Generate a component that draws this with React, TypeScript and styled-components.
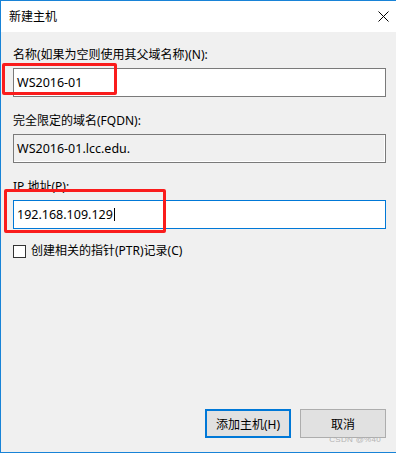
import React from "react";
import styled, { createGlobalStyle } from "styled-components";

const GlobalStyle = createGlobalStyle`
  html, body {
    margin: 0;
    padding: 0;
    background: #ffffff;
  }
  body {
    font-family: "Noto Sans", "Noto Sans CJK SC", sans-serif;
    font-size: 12px;
    color: #000000;
  }
`;

const App: React.FC = () => {
  return (
    <>
      <GlobalStyle />
      <Window>
        <TitleBar>
          <Title>新建主机</Title>
          <CloseButton aria-label="关闭">
            <svg width="11" height="11" viewBox="0 0 11 11">
              <path d="M0.5 0.5 L10.5 10.5 M10.5 0.5 L0.5 10.5" stroke="#000" strokeWidth="1" />
            </svg>
          </CloseButton>
        </TitleBar>

        <Body>
          <Field>
            <Label>名称(如果为空则使用其父域名称)(N):</Label>
            <InputWrap>
              <Input>WS2016-01</Input>
              <Highlight $left={-11} $top={-5} $width={115} $height={32} />
            </InputWrap>
          </Field>

          <Field>
            <Label>完全限定的域名(FQDN):</Label>
            <Input $readOnly>WS2016-01.lcc.edu.</Input>
          </Field>

          <Field>
            <Label>IP 地址(P):</Label>
            <InputWrap>
              <Input $focused>
                192.168.109.129
                <Caret />
              </Input>
              <Highlight $left={-9} $top={-11} $width={162} $height={44} />
            </InputWrap>
          </Field>

          <CheckRow>
            <Checkbox />
            <span>创建相关的指针(PTR)记录(C)</span>
          </CheckRow>

          <ButtonRow>
            <Button $primary>添加主机(H)</Button>
            <Button>取消</Button>
          </ButtonRow>
        </Body>

        <Watermark>CSDN @%40</Watermark>
      </Window>
    </>
  );
};

export default App;

const Window = styled.div`
  position: relative;
  width: 395px;
  height: 451px;
  border-top: 1px solid #1883d7;
  border-left: 1px solid #1883d7;
  border-bottom: 1px solid #1883d7;
  display: flex;
  flex-direction: column;
  background: #f0f0f0;
`;

const TitleBar = styled.div`
  height: 31px;
  background: #ffffff;
  display: flex;
  align-items: center;
  justify-content: space-between;
  padding: 0 7px 0 8px;
`;

const Title = styled.div`
  font-size: 12px;
  line-height: 16px;
`;

const CloseButton = styled.div`
  width: 11px;
  height: 11px;
  display: flex;
  margin-right: 0;
  svg {
    display: block;
  }
`;

const Body = styled.div`
  flex: 1;
  display: flex;
  flex-direction: column;
  padding: 15px 10px 14px 12px;
`;

const Field = styled.div`
  display: flex;
  flex-direction: column;
  margin-bottom: 16px;
  &:nth-of-type(3) {
    margin-bottom: 14px;
  }
`;

const Label = styled.div`
  line-height: 16px;
  margin-bottom: 5px;
  white-space: nowrap;
`;

const InputWrap = styled.div`
  position: relative;
`;

const Input = styled.div<{ $readOnly?: boolean; $focused?: boolean }>`
  height: 29px;
  box-sizing: border-box;
  border: 1px solid ${(p) => (p.$focused ? "#0078d7" : "#7a7a7a")};
  background: ${(p) => (p.$readOnly ? "#f0f0f0" : "#ffffff")};
  box-shadow: ${(p) => (p.$readOnly ? "inset -1px -1px 0 #ffffff" : "none")};
  padding: 0 4px 0 3px;
  display: flex;
  align-items: center;
  font-size: 12.5px;
  white-space: nowrap;
`;

const Caret = styled.span`
  display: inline-block;
  width: 1px;
  height: 13px;
  background: #000;
  margin-left: 1px;
`;

const Highlight = styled.div<{ $left: number; $top: number; $width: number; $height: number }>`
  position: absolute;
  left: ${(p) => p.$left}px;
  top: ${(p) => p.$top}px;
  width: ${(p) => p.$width}px;
  height: ${(p) => p.$height}px;
  box-sizing: border-box;
  border: 3px solid #fa1c1c;
  border-radius: 2px;
  pointer-events: none;
`;

const CheckRow = styled.label`
  display: flex;
  align-items: center;
  gap: 5px;
  line-height: 16px;
`;

const Checkbox = styled.span`
  width: 13px;
  height: 13px;
  box-sizing: border-box;
  border: 1px solid #333333;
  background: #ffffff;
  flex-shrink: 0;
`;

const ButtonRow = styled.div`
  margin-top: auto;
  display: flex;
  justify-content: flex-end;
  gap: 9px;
`;

const Button = styled.div<{ $primary?: boolean }>`
  width: 86px;
  height: 29px;
  box-sizing: border-box;
  border: ${(p) => (p.$primary ? "2px solid #0078d7" : "1px solid #adadad")};
  background: #e1e1e1;
  display: flex;
  align-items: center;
  justify-content: center;
  font-size: 12px;
`;

const Watermark = styled.div`
  position: absolute;
  right: 15px;
  bottom: 8px;
  font-family: "Liberation Sans", sans-serif;
  font-size: 8px;
  letter-spacing: 0.3px;
  color: #b4b4b4;
`;
